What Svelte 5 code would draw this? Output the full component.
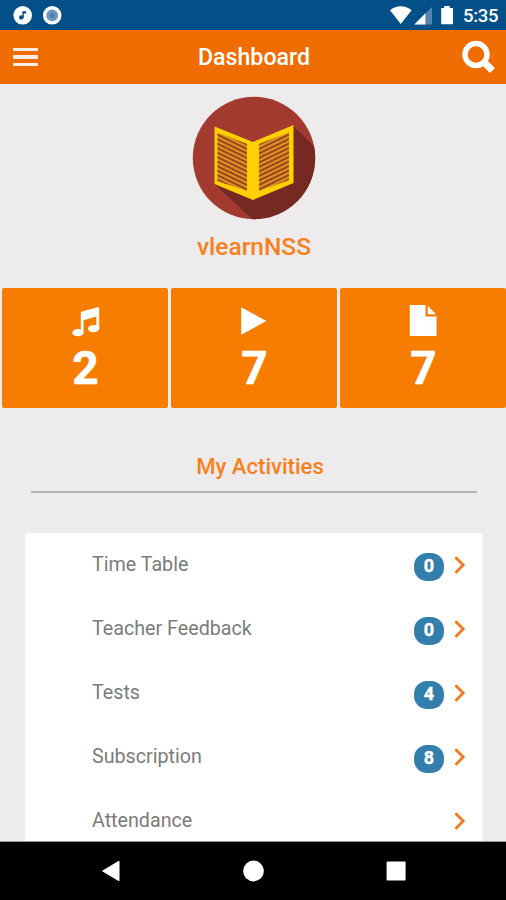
<script>
    let title = "Dashboard";
    let userName = "vlearnNSS";

    let counters = [
        { icon: "music", count: 2 },
        { icon: "play", count: 7 },
        { icon: "file", count: 7 }
    ];

    let activities = [
        { name: "Time Table", badge: 0 },
        { name: "Teacher Feedback", badge: 0 },
        { name: "Tests", badge: 4 },
        { name: "Subscription", badge: 8 },
        { name: "Attendance", badge: null }
    ];

    // text lines on the two pages of the book
    let lines = Array.from({ length: 18 }, (_, i) => 20 + i * 4.5);
</script>

<div class="phone">
    <div class="status">
        <svg width="64" height="30" viewBox="0 0 64 30">
            <circle cx="22.7" cy="15.3" r="9.3" fill="#fff" />
            <ellipse cx="21.3" cy="17.4" rx="2.3" ry="2.2" fill="#064f86" />
            <path d="M22.4 17.4V11.2h3.8v2.2h-2.4v4z" fill="#064f86" />
            <circle cx="52.2" cy="15.3" r="7.6" fill="#6d96bb" stroke="#fff" stroke-width="3.4" />
            <circle cx="52.2" cy="15.3" r="2.6" fill="#4d7faa" />
        </svg>
        <svg class="signals" width="66" height="30" viewBox="0 0 66 30">
            <path d="M0 10.2C6.400 4.800 15.200 4.800 21.600 10.200L10.800 24z" fill="#fff" />
            <path d="M24.300 24.500L42 7v17.500z" fill="#5585ad" />
            <path d="M24.300 24.500L35.400 13.200v11.300z" fill="#fff" />
            <path d="M51.200 8h3V6h5.600v2h3.200v16.200H51.200z" fill="#fff" />
        </svg>
        <span class="clock">5:35</span>
    </div>

    <header>
        <button class="menu" aria-label="Menu"><i></i><i></i><i></i></button>
        <h1>{title}</h1>
        <button class="search" aria-label="Search">
            <svg width="36" height="34" viewBox="0 0 36 34" fill="none" stroke="#fff">
                <circle cx="15" cy="14.500" r="11" stroke-width="5.400" />
                <path d="M22.500 21.800L31.500 30.600" stroke-width="7" />
            </svg>
        </button>
    </header>

    <main>
        <div class="profile">
            <svg width="124" height="124" viewBox="0 0 124 124">
                <defs>
                    <clipPath id="disc"><circle cx="62" cy="62" r="61.200" /></clipPath>
                    <clipPath id="left-page"><path d="M25.500 36.500L55 48V95L25.500 85z" /></clipPath>
                    <clipPath id="right-page"><path d="M67 48L97 36.500V84L67 95z" /></clipPath>
                </defs>
                <g clip-path="url(#disc)">
                    <path d="M0 0h124v124H0z" fill="#a33a30" />
                    <path d="M101.500 30L140 68V140H78L22.500 88L61 104z" fill="#762823" />
                </g>
                <path d="M22.500 30.500L61 46L101.500 29V87L61 104L22.500 88z" fill="#ffd000" />
                <path d="M25.500 36.500L55 48V95L25.500 85zM67 48L97 36.500V84L67 95z" fill="#dc8f22" />
                <g clip-path="url(#left-page)">
                    {#each lines as y}
                    <path d="M24 {y}L57 {y + 16}" stroke="#93431f" stroke-width="1.700" />
                    {/each}
                </g>
                <g clip-path="url(#right-page)">
                    {#each lines as y}
                    <path d="M65 {y + 16}L98 {y}" stroke="#93431f" stroke-width="1.700" />
                    {/each}
                </g>
            </svg>
            <h2>{userName}</h2>
        </div>

        <div class="counters">
            {#each counters as counter}
            <div class="counter">
                <svg width="32" height="36" viewBox="0 0 32 36" fill="#fff">
                    {#if counter.icon == "music"}
                    <path d="M11.800 8.600Q12 7.800 13 7.400L28.700 3.300Q30.200 3 30.200 4.400V25H27.400V12.600L14.500 16.200V29H11.800z" />
                    <ellipse cx="8.900" cy="28.700" rx="5.600" ry="3.600" />
                    <ellipse cx="24.600" cy="24.600" rx="5.600" ry="3.600" />
                    {:else if counter.icon == "play"}
                    <path d="M3.200 3.200L28.400 17L3.200 30.700z" />
                    {:else}
                    <path d="M2.800 1H18.500V12.500H29.500V32H2.800zM20.700 1.700L29 10.300H20.700z" />
                    {/if}
                </svg>
                <span>{counter.count}</span>
            </div>
            {/each}
        </div>

        <h3>My Activities</h3>

        <ul>
            {#each activities as activity}
            <li>
                <span class="name">{activity.name}</span>
                {#if activity.badge !== null}
                <span class="badge">{activity.badge}</span>
                {/if}
                <svg width="12" height="20" viewBox="0 0 12 20">
                    <path d="M1.500 2.200L9.200 10L1.500 17.800" fill="none" stroke="#f07a1c" stroke-width="2.800" />
                </svg>
            </li>
            {/each}
        </ul>
    </main>

    <nav>
        <svg width="506" height="58" viewBox="0 0 506 58" fill="#fff">
            <path d="M102.600 29L119 19.200V38.800z" stroke="#fff" stroke-linejoin="round" />
            <circle cx="253.500" cy="29" r="10.400" />
            <rect x="386.600" y="19.600" width="19" height="19" rx="1" />
        </svg>
    </nav>
</div>

<style>
    :global(body) {
        margin: 0;
    }

    .phone {
        width: 506px;
        height: 900px;
        display: flex;
        flex-direction: column;
        overflow: hidden;
        background-color: #edebec;
        font-family: Roboto, sans-serif;
    }

    .status {
        height: 30px;
        flex: none;
        display: flex;
        align-items: center;
        background-color: #034f87;
        color: #fff;
    }

    .signals {
        margin-left: auto;
    }

    .clock {
        width: 50px;
        box-sizing: border-box;
        padding: 2px 0 0 7px;
        font-size: 18.5px;
        line-height: 28px;
        font-weight: 500;
        letter-spacing: -0.3px;
    }

    header {
        height: 54px;
        flex: none;
        display: grid;
        grid-template-columns: 50px 1fr 50px;
        align-items: center;
        background-color: #ef6c00;
        color: #fff;
    }

    button {
        padding: 0;
        border: 0;
        background: none;
    }

    .menu {
        display: flex;
        flex-direction: column;
        gap: 4px;
        padding: 0 0 0 13px;
    }

    .menu i {
        width: 25px;
        height: 3.3px;
        background-color: #ffece0;
    }

    .search svg {
        display: block;
        margin-left: 5px;
    }

    h1 {
        margin: 0;
        padding-left: 2px;
        text-align: center;
        font-size: 23.2px;
        line-height: 54px;
        font-weight: 500;
    }

    main {
        flex: 1;
        min-height: 0;
        overflow: hidden;
        border-bottom: 1px solid #999;
    }

    .profile {
        height: 204px;
        box-sizing: border-box;
        padding-top: 12px;
        padding-left: 2px;
        text-align: center;
    }

    .profile svg {
        display: block;
        margin: 0 auto;
    }

    h2 {
        margin: 11px 0 0;
        font-size: 24.5px;
        line-height: 32px;
        font-weight: 500;
        color: #f5811f;
    }

    .counters {
        height: 120px;
        display: grid;
        grid-template-columns: repeat(3, 1fr);
        gap: 3px;
        padding: 0 0 0 2px;
    }

    .counter {
        display: flex;
        flex-direction: column;
        align-items: center;
        padding-top: 16px;
        border-radius: 2px;
        background-color: #f77d00;
        color: #fff;
    }

    .counter span {
        padding-left: 1px;
        font-size: 46px;
        line-height: 56px;
        font-weight: 700;
        -webkit-text-stroke: 0.6px #fff;
    }

    h3 {
        margin: 40px 29px 0 31px;
        height: 43px;
        padding-left: 12px;
        border-bottom: 2px solid #b5b4b5;
        text-align: center;
        font-size: 22.1px;
        line-height: 37px;
        font-weight: 500;
        color: #f5811f;
    }

    ul {
        margin: 40px 23px 0 25px;
        padding: 0;
        list-style: none;
        border-radius: 3px 3px 0 0;
        background-color: #fff;
    }

    li {
        height: 64px;
        display: flex;
        align-items: center;
        padding: 0 17px 0 67px;
    }

    .name {
        flex: 1;
        font-size: 19.7px;
        line-height: 28px;
        margin-top: -1px;
        color: #7b7b7b;
    }

    .badge {
        width: 30px;
        height: 28px;
        margin: 3px 10px 0 0;
        border-radius: 13px;
        background-color: #337fab;
        text-align: center;
        font-size: 18px;
        line-height: 26px;
        font-weight: 700;
        color: #fff;
        -webkit-text-stroke: 0.4px #fff;
    }

    nav {
        height: 58px;
        flex: none;
        background-color: #000;
    }

    nav svg {
        display: block;
    }
</style>
